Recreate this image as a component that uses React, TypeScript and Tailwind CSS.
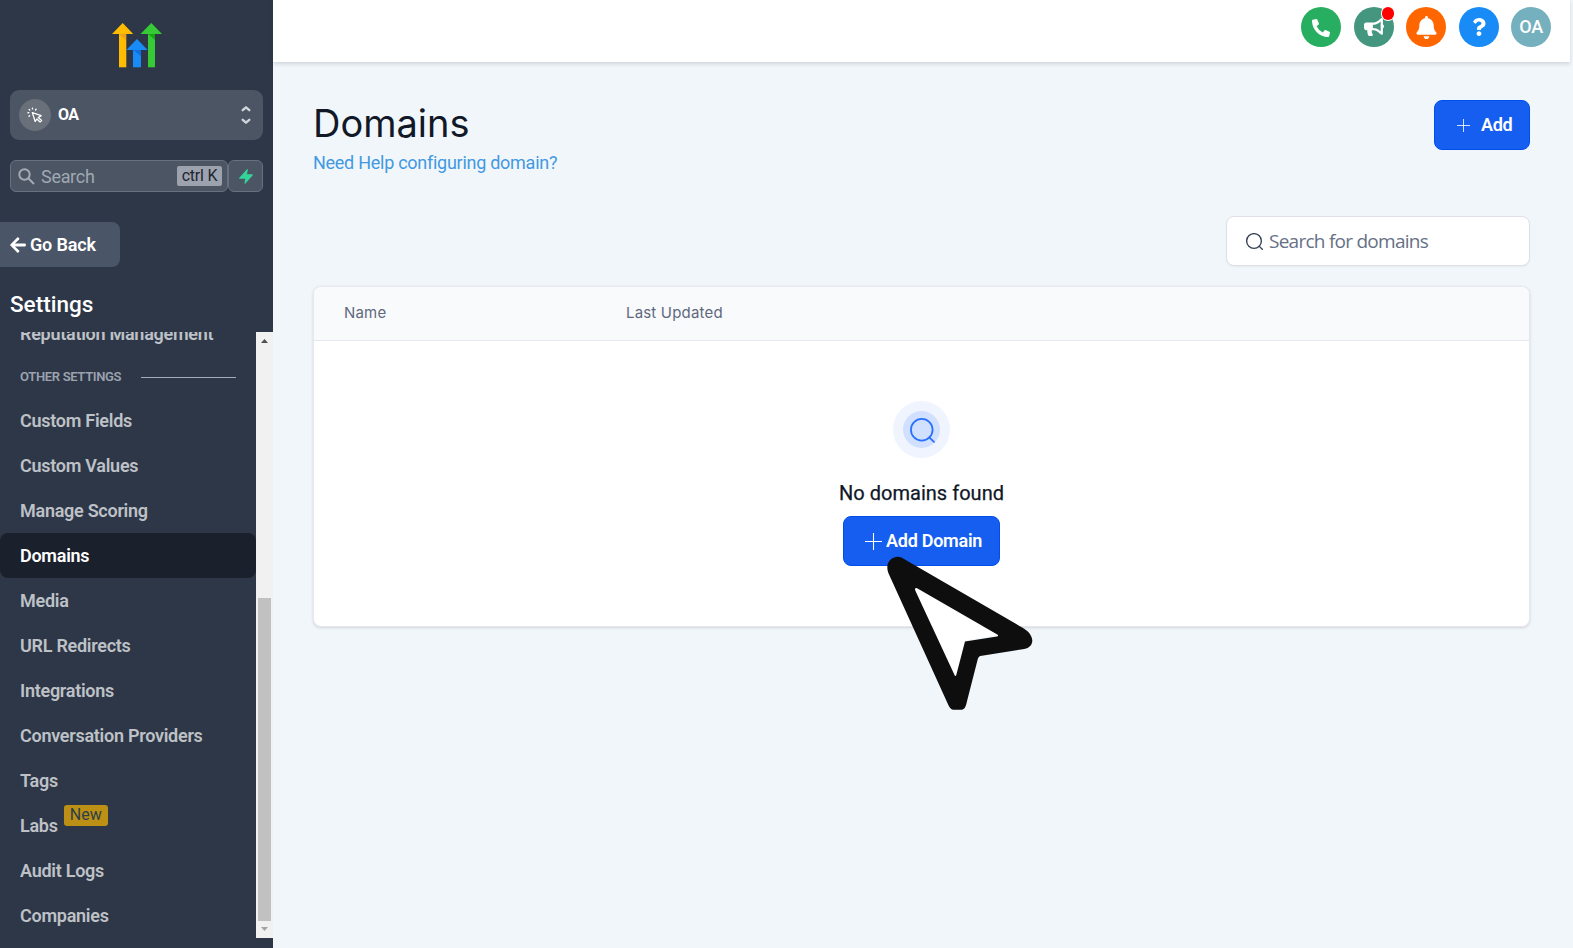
import React from "react";
import { FaPhoneAlt, FaBullhorn, FaBell, FaQuestion, FaArrowLeft } from "react-icons/fa";

const navItems = ["Custom Fields", "Custom Values", "Manage Scoring", "Domains", "Media", "URL Redirects", "Integrations", "Conversation Providers", "Tags", "Labs", "Audit Logs", "Companies"];

function Logo() {
  return (
    <svg width="50" height="45" viewBox="0 0 50 45">
      <path d="M7 11h7.300v33.300H7z" fill="#ffbc00" />
      <path d="M7 11h7v6z" fill="#f0a01a" />
      <path d="M0 11 10.700 0l10.500 11z" fill="#ffbc00" />
      <path d="M36 11h7v33.300h-7z" fill="#37ca37" />
      <path d="M36 11h7v6z" fill="#14a80f" />
      <path d="M28.500 11 39.300 0 50 11z" fill="#37ca37" />
      <path d="M21 27h8v17.300h-8z" fill="#188bf6" />
      <path d="M21 27h8v6z" fill="#0f6fe0" />
      <path d="M14.300 27 25 16l10.700 11z" fill="#188bf6" />
    </svg>
  );
}

function SearchCircle({ className }: { className?: string }) {
  return (
    <svg className={className} viewBox="0 0 24 24" fill="none" stroke="currentColor" strokeLinecap="round">
      <circle cx="11.300" cy="11.300" r="10.400" />
      <path d="M18.500 18.500 23 23" />
    </svg>
  );
}

function Plus({ className }: { className?: string }) {
  return (
    <svg className={className} viewBox="0 0 16 16" stroke="currentColor" fill="none">
      <path d="M8 0v16M0 8h16" />
    </svg>
  );
}

function Sidebar() {
  return (
    <aside className="flex h-full w-[273px] shrink-0 flex-col bg-[#2d3748]">
      <div className="flex h-[90px] items-start justify-center pt-[23px]">
        <Logo />
      </div>
      <div className="mx-[10px] flex h-[50px] w-[253px] items-center rounded-[9px] bg-[#4b5563] pr-[9px] pl-[9px]">
        <span className="flex h-8 w-8 items-center justify-center rounded-full bg-[#697079] text-white">
          <svg width="16" height="16" viewBox="0 0 16 16" fill="none" stroke="currentColor" strokeLinecap="round" strokeLinejoin="round">
            <path strokeWidth="1.300" d="M5.300 5.600 14.200 8.600l-2.900 2 3.300 3-1.500 1.300-3.200-2.900-1.700 2.500z" />
            <path strokeWidth="1.400" d="M5.500 1.900V1.300M8.500 2.900l.6-.6M2.200 2.500l.5.500M1 5.800h.8M2 9.300l.6-.5" />
          </svg>
        </span>
        <span className="ml-[7px] flex-1 text-[16px] leading-6 font-bold tracking-[-0.600px] text-white">OA</span>
        <svg width="16" height="20" viewBox="0 0 16 20" fill="none" stroke="#d1d5db" strokeWidth="2.400" strokeLinecap="round" strokeLinejoin="round">
          <path d="M4.700 5.200 8 2.300l3.300 2.900M4.700 14.800 8 17.700l3.300-2.900" />
        </svg>
      </div>
      <div className="mt-5 ml-[10px] flex h-8 w-[253px]">
        <div className="flex w-[218px] items-center rounded-[6px] border border-[#687180] bg-[#4b5563] pr-[5px] pl-[7px]">
          <svg width="17" height="17" viewBox="0 0 17 17" fill="none" stroke="#a3aab5" strokeWidth="2">
            <circle cx="6.500" cy="6.500" r="5.200" />
            <path d="m10.500 10.500 5.500 5.500" />
          </svg>
          <span className="mt-[2px] ml-[6px] flex-1 text-[18px] leading-6 tracking-[-0.300px] text-[#a0a8b4]">Search</span>
          <span className="flex h-5 w-[45px] items-center justify-center rounded-[2px] bg-[#9ca3af] text-[16px] leading-5 tracking-[-0.200px] text-[#1f2530]">ctrl K</span>
        </div>
        <div className="flex w-[35px] items-center justify-center rounded-[6px] border border-[#687180] bg-[#4b5563]">
          <svg width="14" height="15" viewBox="0 0 14 15" fill="#34d399">
            <path d="M8 .2C8.600-.2 9 .2 8.800 1L8 5.200h5.200c.7 0 .9.500.5 1L6.500 14.600c-.5.500-1.100.2-1-.4l.7-4.400H.8c-.7 0-.9-.6-.5-1z" />
          </svg>
        </div>
      </div>
      <div className="mt-[30px] flex h-[45px] w-[120px] items-center rounded-r-[8px] bg-[#4a5568] pl-[9px] text-white">
        <FaArrowLeft className="h-[18px] w-[18px]" />
        <span className="ml-[3px] text-[18px] font-semibold tracking-[-0.150px] whitespace-nowrap">Go Back</span>
      </div>
      <div className="flex h-[65px] items-start pt-[21px] pl-[10px] text-[22.500px] leading-8 font-medium text-white">Settings</div>
      <div className="flex h-[606px] overflow-hidden">
        <nav className="w-[256px] text-[18px] font-semibold tracking-[-0.270px] text-[#bec1c6]">
          <div className="-mt-[21px] flex h-[45px] items-center pl-5">Reputation Management</div>
          <div className="flex h-[42px] items-center pb-[1px] pl-5">
            <span className="w-[121px] text-[13px] tracking-[-0.330px] text-[#9ca3af]">OTHER SETTINGS</span>
            <span className="mt-[1px] h-px w-[95px] bg-[#a3acb9]" />
          </div>
          {navItems.map((t) => (
            <div key={t} className={t === "Domains" ? "flex h-[45px] items-center rounded-[8px] bg-[#1a202c] pl-5 text-white" : "flex h-[45px] items-center pl-5"}>
              {t}
              {t === "Labs" && (
                <span className="-mt-5 ml-[6px] flex h-[21px] w-[44px] items-center justify-center rounded-[3px] bg-[#bc9015] pb-[2px] text-[16px] font-normal tracking-normal text-[#2b3f48]">New</span>
              )}
            </div>
          ))}
        </nav>
        <div className="flex w-[17px] flex-col items-center justify-between bg-[#f1f1f1]">
          <svg width="17" height="17" viewBox="0 0 17 17"><path d="M5 11h7L8.500 7z" fill="#505050" /></svg>
          <span className="mt-auto h-[323px] w-[13px] bg-[#c1c1c1]" />
          <svg width="17" height="17" viewBox="0 0 17 17"><path d="M5 6h7l-3.500 4z" fill="#a3a3a3" /></svg>
        </div>
      </div>
    </aside>
  );
}

const round = "relative flex h-10 w-10 items-center justify-center rounded-full text-white";

function Header() {
  return (
    <header className="mr-[3px] flex h-[62px] items-start justify-end bg-white pt-[7px] pr-[19px] shadow-[0_2px_4px_rgba(30,50,70,0.16)]">
      <div className={`${round} bg-[#27ae60]`}><FaPhoneAlt className="mt-[1px] h-[18px] w-[18px]" /></div>
      <div className={`${round} ml-[13px] bg-[#44967f]`}>
        <FaBullhorn className="h-[20px] w-[20px]" />
        <span className="absolute top-0 right-0 h-[13px] w-3 rounded-full bg-[#ff0000] ring-1 ring-white" />
      </div>
      <div className={`${round} ml-3 bg-[#ff6600]`}><FaBell className="h-[23px] w-[21px]" /></div>
      <div className={`${round} ml-[13px] bg-[#188bf6]`}><FaQuestion className="h-[18px] w-[18px]" /></div>
      <div className={`${round} ml-3 bg-[#74b0bd] pb-[1px] text-[18px] font-medium tracking-[-0.400px]`}>OA</div>
    </header>
  );
}

export default function App() {
  return (
    <div className="relative flex h-[948px] w-[1573px] overflow-hidden bg-[#f1f6fa] font-['Roboto',sans-serif]">
      <Sidebar />
      <div className="flex min-w-0 flex-1 flex-col">
        <Header />
        <main className="pr-[43px] pl-10">
          <div className="flex items-start justify-between pt-[38px]">
            <div className="-mt-[1px]">
              <h1 className="font-['Inter',sans-serif] text-[38px] leading-[48px] font-normal text-[#111827]">Domains</h1>
              <a className="mt-[4px] block text-[18px] leading-6 tracking-[-0.270px] text-[#4299e1]">Need Help configuring domain?</a>
            </div>
            <button className="flex h-[50px] w-24 items-center rounded-[8px] border border-[#004eeb] bg-[#155eef] pl-[22px] text-[18px] font-semibold text-white">
              <Plus className="h-[13px] w-[13px]" />
              <span className="-mt-[2px] ml-[11px] tracking-[-0.300px]">Add</span>
            </button>
          </div>
          <div className="mt-[41px] flex justify-end">
            <div className="flex h-[50px] w-[304px] items-center rounded-[8px] border border-[#dfdfe8] bg-white pl-[19px] shadow-[0_1px_2px_rgba(16,24,40,0.05)]">
              <SearchCircle className="h-[17px] w-[17px] stroke-[1.900] text-[#344054]" />
              <span className="ml-[6px] font-['Open_Sans',sans-serif] text-[19px] tracking-[-0.740px] text-[#667085]">Search for domains</span>
            </div>
          </div>
          <section className="mt-5 h-[341px] overflow-hidden rounded-[8px] border border-[#e6e8ee] bg-white shadow-[0_1px_3px_rgba(16,24,40,0.14)]">
            <div className="flex h-[54px] items-center border-b border-[#e6e8ef] bg-[#f9fafc] font-['Inter',sans-serif] text-[15px] font-normal tracking-[0.180px] text-[#5f697e]">
              <span className="w-[282px] pl-[30px]">Name</span>
              <span className="pl-[30px]">Last Updated</span>
            </div>
            <div className="flex flex-col items-center pt-[60px]">
              <div className="flex h-[57px] w-[57px] items-center justify-center rounded-full bg-[#eff4ff]">
                <div className="flex h-[37px] w-[37px] items-center justify-center rounded-full bg-[#d1e0ff] pt-[1px] pl-[1px]">
                  <SearchCircle className="h-[25px] w-[25px] stroke-[1.700] text-[#2970ff]" />
                </div>
              </div>
              <p className="mt-[20px] text-[20px] leading-[30px] font-normal tracking-[0.030px] text-[#101828] [-webkit-text-stroke:0.25px_#101828]">No domains found</p>
              <button className="mt-[8px] flex h-[50px] w-[157px] items-center rounded-[8px] border border-[#004eeb] bg-[#155eef] pl-[21px] text-[18px] font-semibold text-white">
                <Plus className="h-[17px] w-[17px]" />
                <span className="-mt-[2px] ml-[4px] tracking-[-0.260px] whitespace-nowrap">Add Domain</span>
              </button>
            </div>
          </section>
        </main>
      </div>
      <svg className="absolute top-[550px] left-[880px]" width="160" height="166" viewBox="0 0 160 166">
        <path d="M35 38.500 118 85 85 90.500 75.500 126z" fill="#fff" />
        <path fillRule="evenodd" fill="#0e0e0e" d="M8.800 24C5 15 9 8.500 16 7c3-.5 5.500.5 8 2l119 69c5 3 9 7 9.300 12.500 0 4.500-3 7.500-8 8.500l-44 7c-1.500.5-2 1.500-2.500 3L86.800 152c-1 5-2.500 7.500-5 7.700H74.500c-3.500 0-5-2-6.500-5.500zM35.500 38.300c-.8.600-.5 1.500 0 2.700l39 84c.5 1.200 1.500 1.200 1.800 0L85 91.500l32-5c1.500-.3 1.300-1.300.3-2L38 38.800c-1-.6-1.800-.9-2.500-.5z" />
      </svg>
    </div>
  );
}
